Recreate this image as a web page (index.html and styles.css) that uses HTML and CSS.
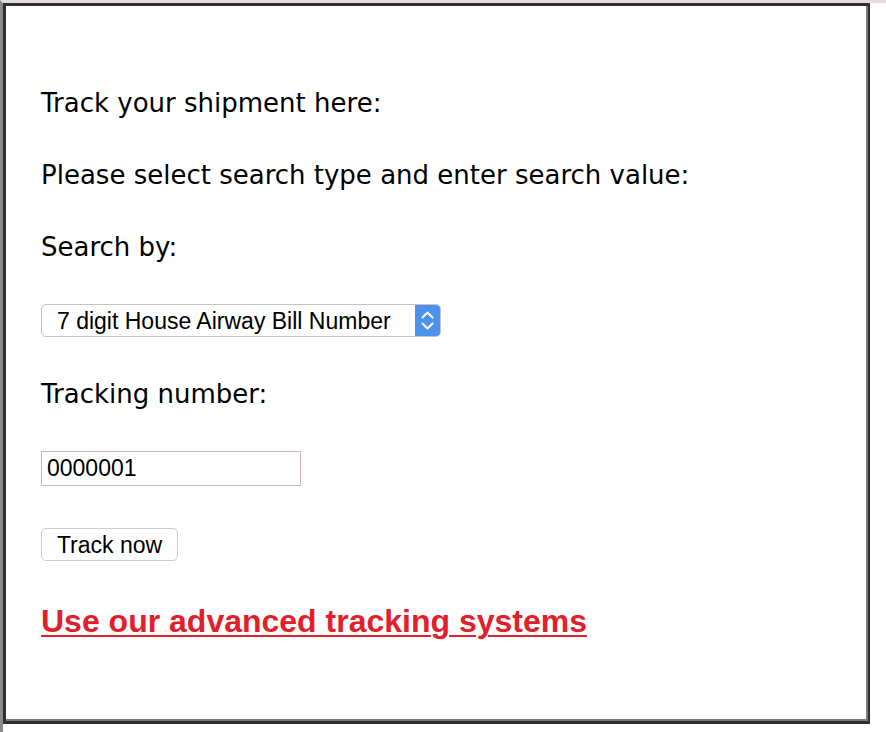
FILE: index.html
```html
<!DOCTYPE html>
<html lang="en">
<head>
<meta charset="utf-8">
<title>Track your shipment</title>
<link rel="stylesheet" href="styles.css">
</head>
<body>
<div class="page">
  <div class="frame">
    <form class="pane" onsubmit="return false">
      <p class="label">Track your shipment here:</p>
      <p class="label">Please select search type and enter search value:</p>
      <p class="label">Search by:</p>
      <div class="select-wrap">
        <select class="select">
          <option>7 digit House Airway Bill Number</option>
        </select>
        <span class="stepper" aria-hidden="true">
          <svg width="25" height="31" viewBox="0 0 25 31">
            <path d="M7.5 12.5 L12.5 7.5 L17.5 12.5" fill="none" stroke="#fff" stroke-width="2" stroke-linecap="round" stroke-linejoin="round"/>
            <path d="M7.5 18.5 L12.5 23.5 L17.5 18.5" fill="none" stroke="#fff" stroke-width="2" stroke-linecap="round" stroke-linejoin="round"/>
          </svg>
        </span>
      </div>
      <p class="label">Tracking number:</p>
      <input class="field" type="text" value="0000001">
      <button class="btn" type="submit">Track now</button>
      <a class="adv-link" href="#">Use our advanced tracking systems</a>
    </form>
  </div>
</div>
</body>
</html>
```

FILE: styles.css
```css
html, body {
  margin: 0;
  padding: 0;
  background: #ffffff;
}

.page {
  height: 729px;
  border-left: 3px solid #8a8a8a;
  border-top: 3px solid #e2dcdc;
}

.frame {
  box-sizing: border-box;
  width: 867px;
  height: 721px;
  border-style: solid;
  border-color: #2f2f2f;
  border-width: 3px 2px 3px 3px;
  background: #ffffff;
}

.pane {
  box-sizing: border-box;
  height: 100%;
  margin: 0;
  border-right: 2px solid #7b7b7b;
  border-bottom: 2px solid #7b7b7b;
  padding: 82px 0 0 35px;
  display: flex;
  flex-direction: column;
  align-items: flex-start;
  gap: 42px;
}

.label {
  margin: 0;
  font-family: "DejaVu Sans", Verdana, sans-serif;
  font-size: 26px;
  line-height: 30px;
  color: #000000;
}

.select-wrap {
  position: relative;
  width: 400px;
  height: 33px;
}

.select {
  -webkit-appearance: none;
  appearance: none;
  box-sizing: border-box;
  width: 400px;
  height: 33px;
  margin: 0;
  padding: 0 0 0 15px;
  border: 1px solid #cbbfbf;
  border-radius: 5px;
  background: #ffffff;
  font-family: "Liberation Sans", Arial, sans-serif;
  font-size: 23px;
  color: #000000;
}

.stepper {
  position: absolute;
  top: 1px;
  right: 1px;
  width: 25px;
  height: 31px;
  background: #4a92ec;
  border-radius: 0 4px 4px 0;
  display: flex;
}

.field {
  box-sizing: border-box;
  width: 260px;
  height: 35px;
  margin: 0;
  padding: 0 0 0 5px;
  border: 1px solid #c6b6b8;
  border-radius: 0;
  font-family: "Liberation Sans", Arial, sans-serif;
  font-size: 23px;
  color: #000000;
  background: #ffffff;
}

.btn {
  box-sizing: border-box;
  width: 137px;
  height: 33px;
  margin: 0;
  padding: 2px 0 0;
  border: 1px solid #d3c9ca;
  border-radius: 5px;
  background: #ffffff;
  font-family: "Liberation Sans", Arial, sans-serif;
  font-size: 23px;
  color: #000000;
}

.adv-link {
  font-family: "Liberation Sans", Arial, sans-serif;
  font-weight: bold;
  font-size: 32px;
  line-height: 36px;
  color: #e2202b;
  text-decoration: underline;
  text-decoration-thickness: 2px;
  text-underline-offset: 3px;
}
```
